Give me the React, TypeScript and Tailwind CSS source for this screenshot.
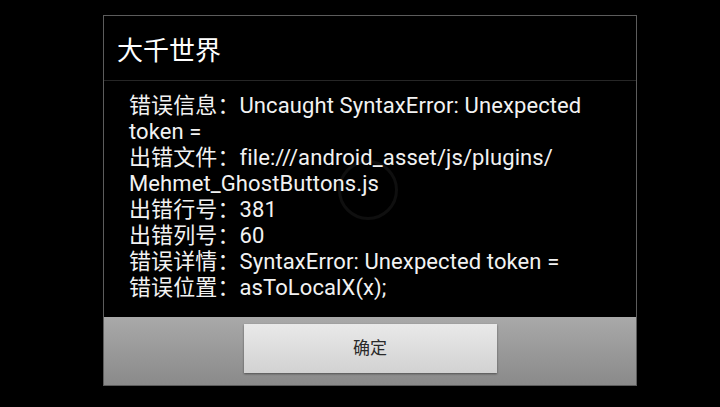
import React from "react";

const cjk = { fontFamily: 'Roboto, "Noto Sans CJK SC", sans-serif' };

export default function App() {
  return (
    <div className="w-[720px] h-[407px] bg-black overflow-hidden relative" style={cjk}>
      <div className="absolute left-[338px] top-[160px] w-[60px] h-[60px] rounded-full border-[3px] border-[#0f0f0f]" />
      <div className="relative ml-[103px] mt-[15px] w-[534px] h-[371px] border border-[#5c5c5c] flex flex-col">
        <div className="h-[65px] border-b border-[#262626] flex items-center pl-[13px] text-[26px] text-white leading-none pt-[6px]">
          大千世界
        </div>
        <div className="flex-1 pt-[12px] pl-[25px] pr-[16px] text-[22px] leading-[26px] text-[#f2f2f2] tracking-[0.1px]">
          <div>错误信息：Uncaught SyntaxError: Unexpected<br />token =</div>
          <div>出错文件：file:///android_asset/js/plugins/<br />Mehmet_GhostButtons.js</div>
          <div>出错行号：381</div>
          <div>出错列号：60</div>
          <div>错误详情：SyntaxError: Unexpected token =</div>
          <div>错误位置：asToLocalX(x);</div>
        </div>
        <div className="h-[68px] bg-gradient-to-b from-[#a9a9a9] to-[#8a8a8a] flex justify-center pt-[7px]">
          <div className="w-[253px] h-[49px] bg-gradient-to-b from-[#e9e9e9] to-[#d2d2d2] shadow-[0_1px_2px_rgba(0,0,0,0.45)] flex items-center justify-center text-[17px] text-[#2a2a2a]">
            确定
          </div>
        </div>
      </div>
    </div>
  );
}
